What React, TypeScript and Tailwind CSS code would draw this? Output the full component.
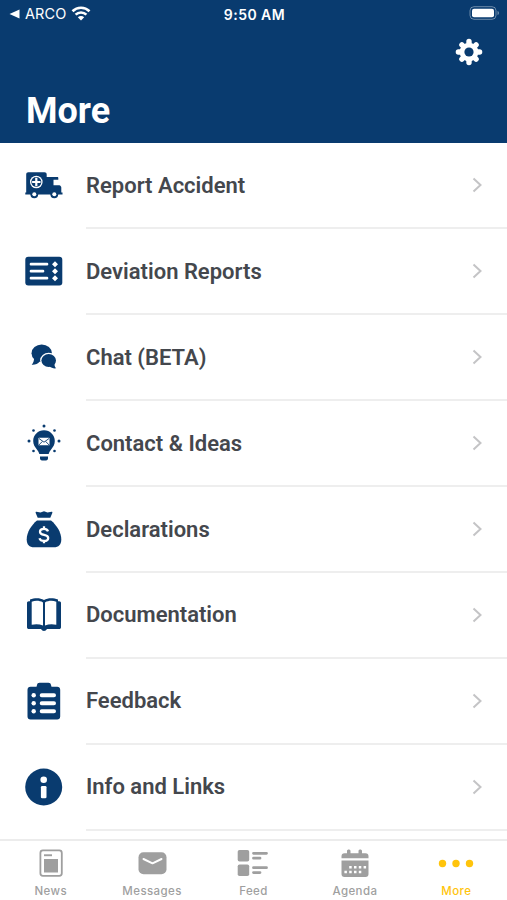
import type { ReactNode } from "react";

interface MenuItem {
  label: string;
  icon: ReactNode;
}

interface Tab {
  label: string;
  icon: ReactNode;
  active?: boolean;
}

const GearIcon = () => (
  <svg viewBox="0 0 28 28" className="size-7" fill="currentColor">
    <g stroke="currentColor" strokeWidth="5.400" strokeLinecap="round">
      <path d="M14 3.400v21.200M3.400 14h21.200" />
      <path d="M6.900 6.900l14.200 14.200M21.100 6.900L6.900 21.100" />
    </g>
    <circle cx="14" cy="14" r="9.300" />
    <circle cx="14" cy="14" r="4.600" fill="#093b6f" />
  </svg>
);

const AmbulanceIcon = () => (
  <svg viewBox="0 0 44 44" className="size-11" fill="currentColor">
    <path d="M6.300 9.300h16.200c1.300 0 2.200.9 2.200 2.200V14h10.600c.6 0 1 .4 1 1v1.800h-4.800v5.400h5.800c1.200.4 2 1.200 2 2.400v4.800h1.200v2H3.300v-2h.9V11.400c0-1.200.9-2.100 2.100-2.100z" />
    <circle cx="14.300" cy="19" r="6.300" fill="white" />
    <circle cx="14.300" cy="19" r="5" />
    <path d="M14.300 14.800v8.400M10.100 19h8.400" stroke="white" strokeWidth="2.200" />
    <circle cx="12.300" cy="31.300" r="3.900" />
    <circle cx="32.300" cy="31.300" r="3.900" />
    <circle cx="12.300" cy="31.300" r="2" fill="white" />
    <circle cx="32.300" cy="31.300" r="2" fill="white" />
  </svg>
);

const ReportIcon = () => (
  <svg viewBox="0 0 44 44" className="size-11" fill="currentColor">
    <rect x="3.300" y="7.800" width="37" height="28.800" rx="3" />
    <path d="M9 15.200h16M9 22.200h12M9 29.200h16" stroke="white" strokeWidth="2.700" strokeLinecap="round" />
    <path d="M33 12.200l3 3-3 3-3-3zM33 19.200l3 3-3 3-3-3zM33 26.200l3 3-3 3-3-3z" fill="white" />
  </svg>
);

const ChatIcon = () => (
  <svg viewBox="0 0 44 44" className="size-11" fill="currentColor">
    <ellipse cx="19.700" cy="18.300" rx="10.200" ry="8.800" />
    <path d="M12 22c.3 3.500-.6 6-2.300 7.800 3.300.3 6.100-.9 8-3.300z" />
    <g stroke="white" strokeWidth="2.600" strokeLinejoin="round">
      <ellipse cx="26.700" cy="25.500" rx="7.300" ry="6.500" />
    </g>
    <ellipse cx="26.700" cy="25.500" rx="7.300" ry="6.500" />
    <path d="M32.500 28c-.2 2.200.2 3.800 1.700 5.300-2.500.3-4.800-.2-6.700-1.700z" />
  </svg>
);

const BulbIcon = () => (
  <svg viewBox="0 0 44 44" className="size-11" fill="currentColor">
    <path d="M22 9.300c6 0 10.800 4.800 10.800 10.700 0 3.700-1.700 6-3.700 8.400-1.300 1.600-2 3-2.500 4.700h-9.200c-.5-1.700-1.200-3.100-2.500-4.700-2-2.400-3.700-4.700-3.700-8.400C11.200 14.100 16 9.300 22 9.300z" />
    <path d="M18 35.500h8v2c0 1.100-.8 1.800-2 2h-4c-1.200-.2-2-.9-2-2z" />
    <rect x="16.500" y="16.800" width="11" height="7.400" rx=".5" fill="white" />
    <path d="M16.700 17.300l5.300 3.900 5.300-3.900M16.900 24l3.500-3.600M27.100 24l-3.500-3.600" fill="none" stroke="currentColor" strokeWidth=".9" />
    <circle cx="22" cy="5" r="1.500" />
    <circle cx="11.500" cy="9.500" r="1.300" />
    <circle cx="32.500" cy="9.500" r="1.300" />
    <circle cx="7" cy="20" r="1.500" />
    <circle cx="37" cy="20" r="1.500" />
    <circle cx="11.500" cy="30" r="1.300" />
    <circle cx="32.500" cy="30" r="1.300" />
  </svg>
);

const MoneyBagIcon = () => (
  <svg viewBox="0 0 44 44" className="size-11" fill="currentColor">
    <path d="M14.500 4.700l4 .7L22 4.200l3.500 1.200 4-.7c.8 0 1.100.6.8 1.200l-2 4.800H15.700l-2-4.800c-.3-.6 0-1.200.8-1.200z" />
    <path d="M15 13.500h14c5.700 4.600 10.300 11.800 10.300 19 0 5-2.600 7.800-7.500 7.800H12.200c-4.900 0-7.500-2.800-7.500-7.800 0-7.200 4.600-14.400 10.300-19z" />
    <path d="M26 24.300c-.6-1.600-2-2.400-4-2.400-2.300 0-4 1.100-4 3 0 4.100 8.200 1.900 8.200 6 0 1.900-1.800 3-4.200 3s-4-1-4.500-2.700M22 19.200V22M22 33.500v2.800" fill="none" stroke="white" strokeWidth="2.300" />
  </svg>
);

const BookIcon = () => (
  <svg viewBox="0 0 44 44" className="size-11" fill="currentColor">
    <path d="M22 6.900C26 4.600 31.500 4.600 36 6.600v1.600h1.200c1.100 0 1.800.7 1.800 1.800v24.200c0 1.100-.7 1.800-1.800 1.800H25c-.8 1.300-1.700 1.900-3 1.900s-2.200-.6-3-1.900H6.800C5.700 36 5 35.300 5 34.200V10c0-1.100.7-1.800 1.800-1.800H8V6.600c4.500-2 10-2 14 .3z" />
    <path d="M9.700 8.700c3.800-1.300 7.700-1.200 11.300.7v23.100c-3.500-1.500-7.600-1.700-11.300-.7zM34.300 8.700C30.500 7.400 26.600 7.500 23 9.400v23.100c3.500-1.500 7.600-1.700 11.300-.7z" fill="white" />
  </svg>
);

const ClipboardIcon = () => (
  <svg viewBox="0 0 44 44" className="size-11" fill="currentColor">
    <path d="M17.500 3.800h9c1.500 0 2.200.8 2.500 2.200l.5 1.700h5.700c1.800 0 3 1.200 3 3v26.800c0 1.800-1.200 3-3 3H8.500c-1.800 0-3-1.200-3-3V10.700c0-1.800 1.200-3 3-3h6l.5-1.700c.3-1.400 1-2.200 2.500-2.200z" />
    <path d="M19.700 16.300h12.300M19.700 24.300h12.300M19.700 32.300h12.300" stroke="white" strokeWidth="4" strokeLinecap="round" />
    <circle cx="11.700" cy="16.300" r="2.200" fill="white" />
    <circle cx="11.700" cy="24.300" r="2.200" fill="white" />
    <circle cx="11.700" cy="32.300" r="2.200" fill="white" />
  </svg>
);

const InfoIcon = () => (
  <svg viewBox="0 0 44 44" className="size-11" fill="currentColor">
    <circle cx="21.700" cy="22" r="18.500" />
    <circle cx="21.700" cy="14.800" r="3.300" fill="white" />
    <rect x="18.900" y="21" width="5.600" height="12.300" rx="1.300" fill="white" />
  </svg>
);

const NewsIcon = () => (
  <svg viewBox="0 0 32 32" className="size-8" fill="currentColor">
    <rect x="5.400" y="3.400" width="21.400" height="25.400" rx="2.500" fill="none" stroke="currentColor" strokeWidth="1.800" />
    <rect x="9" y="7.300" width="8" height="1.900" />
    <rect x="9" y="12" width="14" height="13.500" />
  </svg>
);

const MailIcon = () => (
  <svg viewBox="0 0 32 32" className="size-8" fill="currentColor">
    <rect x="2.500" y="5.300" width="28" height="22" rx="5" />
    <path d="M7.500 12l9 4.300 9-4.300" fill="none" stroke="white" strokeWidth="2" strokeLinecap="round" strokeLinejoin="round" />
  </svg>
);

const FeedIcon = () => (
  <svg viewBox="0 0 32 32" className="size-8" fill="currentColor">
    <rect x=".700" y="3" width="11.500" height="11.500" rx="1.800" />
    <rect x=".700" y="17.500" width="11.500" height="11.500" rx="1.800" />
    <path d="M16.500 6.300h13M16.500 11.200h6.500M16.500 20.700h13M16.500 25.600h6.500" stroke="currentColor" strokeWidth="2.800" strokeLinecap="round" />
  </svg>
);

const CalendarIcon = () => (
  <svg viewBox="0 0 32 32" className="size-8" fill="currentColor">
    <path d="M4.500 6.300H8V4c0-2 3.500-2 3.500 0v2.300h8V4c0-2 3.500-2 3.500 0v2.300h3.500c2 0 3 1 3 3v2h-27v-2c0-2 1-3 3-3z" />
    <path d="M2.500 13.500h27V27c0 2-1 3-3 3h-21c-2 0-3-1-3-3z" />
    <path d="M10.200 20.200h16.900M5.400 25h16.900" stroke="white" strokeWidth="2.500" strokeDasharray="2.500 2.300" />
  </svg>
);

const DotsIcon = () => (
  <svg viewBox="0 0 40 32" className="h-8 w-10" fill="currentColor">
    <circle cx="6.500" cy="16.500" r="3.700" />
    <circle cx="20" cy="16.500" r="3.700" />
    <circle cx="33.500" cy="16.500" r="3.700" />
  </svg>
);

const menuItems: MenuItem[] = [
  { label: "Report Accident", icon: <AmbulanceIcon /> },
  { label: "Deviation Reports", icon: <ReportIcon /> },
  { label: "Chat (BETA)", icon: <ChatIcon /> },
  { label: "Contact & Ideas", icon: <BulbIcon /> },
  { label: "Declarations", icon: <MoneyBagIcon /> },
  { label: "Documentation", icon: <BookIcon /> },
  { label: "Feedback", icon: <ClipboardIcon /> },
  { label: "Info and Links", icon: <InfoIcon /> },
];

const tabs: Tab[] = [
  { label: "News", icon: <NewsIcon /> },
  { label: "Messages", icon: <MailIcon /> },
  { label: "Feed", icon: <FeedIcon /> },
  { label: "Agenda", icon: <CalendarIcon /> },
  { label: "More", icon: <DotsIcon />, active: true },
];

const StatusBar = () => (
  <div className="grid h-7 grid-cols-3 items-center pr-[7px] pl-[9px] text-white">
    <div className="flex items-center">
      <svg viewBox="0 0 11 10" className="h-2.5 w-[11px]" fill="currentColor">
        <path d="M.500 5L10.500.500v9z" />
      </svg>
      <span className="ml-[5px] font-['Inter'] text-[14.500px] tracking-[0.1px]">ARCO</span>
      <svg viewBox="0 0 20 15" className="ml-[5px] h-[15px] w-5 -translate-y-px" fill="none" stroke="currentColor">
        <path d="M1.500 5.200c4.700-4.600 12.300-4.600 17 0M4.600 8.600c3-2.900 7.800-2.900 10.800 0" strokeWidth="2.600" />
        <path d="M10 14.500l-3.200-3.200c1.900-1.600 4.500-1.600 6.400 0z" fill="currentColor" stroke="none" />
      </svg>
    </div>
    <span className="text-center font-['Inter'] text-[14px] font-semibold tracking-[0.45px]">9:50 AM</span>
    <svg viewBox="0 0 31 14" className="h-3.5 w-[31px] -translate-y-px justify-self-end" fill="currentColor">
      <rect x="1" y=".700" width="26" height="12.600" rx="4" fill="none" stroke="currentColor" strokeOpacity=".4" />
      <rect x="3" y="2.700" width="22" height="8.600" rx="2" />
      <path d="M28.500 5c2 .500 2 3.500 0 4z" opacity=".4" />
    </svg>
  </div>
);

export default function App() {
  return (
    <div className="flex h-[900px] w-[507px] flex-col overflow-hidden bg-white font-['Roboto',sans-serif]">
      <header className="flex h-[142.500px] shrink-0 flex-col bg-[#093b6f] text-white">
        <StatusBar />
        <div className="flex justify-end pt-2.5 pr-6">
          <GearIcon />
        </div>
        <h1 className="mt-6 pl-[26px] text-[36px] leading-[42px] font-bold">More</h1>
      </header>

      {/* Menu list */}
      <main className="min-h-0 flex-1 overflow-hidden pt-px">
        {menuItems.map((item) => (
          <div key={item.label} className="flex h-[85.900px] items-center pl-[22px]">
            <div className="flex w-11 shrink-0 items-center justify-center pb-0.5 text-[#093b6f]">{item.icon}</div>
            <div className="ml-5 flex h-full flex-1 items-center justify-between border-b-2 border-[#eeeeee] pr-6">
              <span className="text-[22px] font-semibold text-[#44474d]">{item.label}</span>
              <svg viewBox="0 0 12 16" className="h-4 w-3" fill="none" stroke="#c4c4c6" strokeWidth="2">
                <path d="M2.500 1.500L9.500 8l-7 6.500" />
              </svg>
            </div>
          </div>
        ))}
      </main>

      {/* Tab bar */}
      <nav className="grid h-[61px] shrink-0 grid-cols-5 border-t-2 border-[#ececec] bg-white">
        {tabs.map((tab) => (
          <button
            key={tab.label}
            className={`flex flex-col items-center pt-1.5 ${tab.active ? "text-[#ffc40c]" : "text-[#9f9f9f]"}`}
          >
            {tab.icon}
            <span className="mt-1 font-['Inter'] text-[11.500px] leading-4 font-medium tracking-[0.4px]">{tab.label}</span>
          </button>
        ))}
      </nav>
    </div>
  );
}
